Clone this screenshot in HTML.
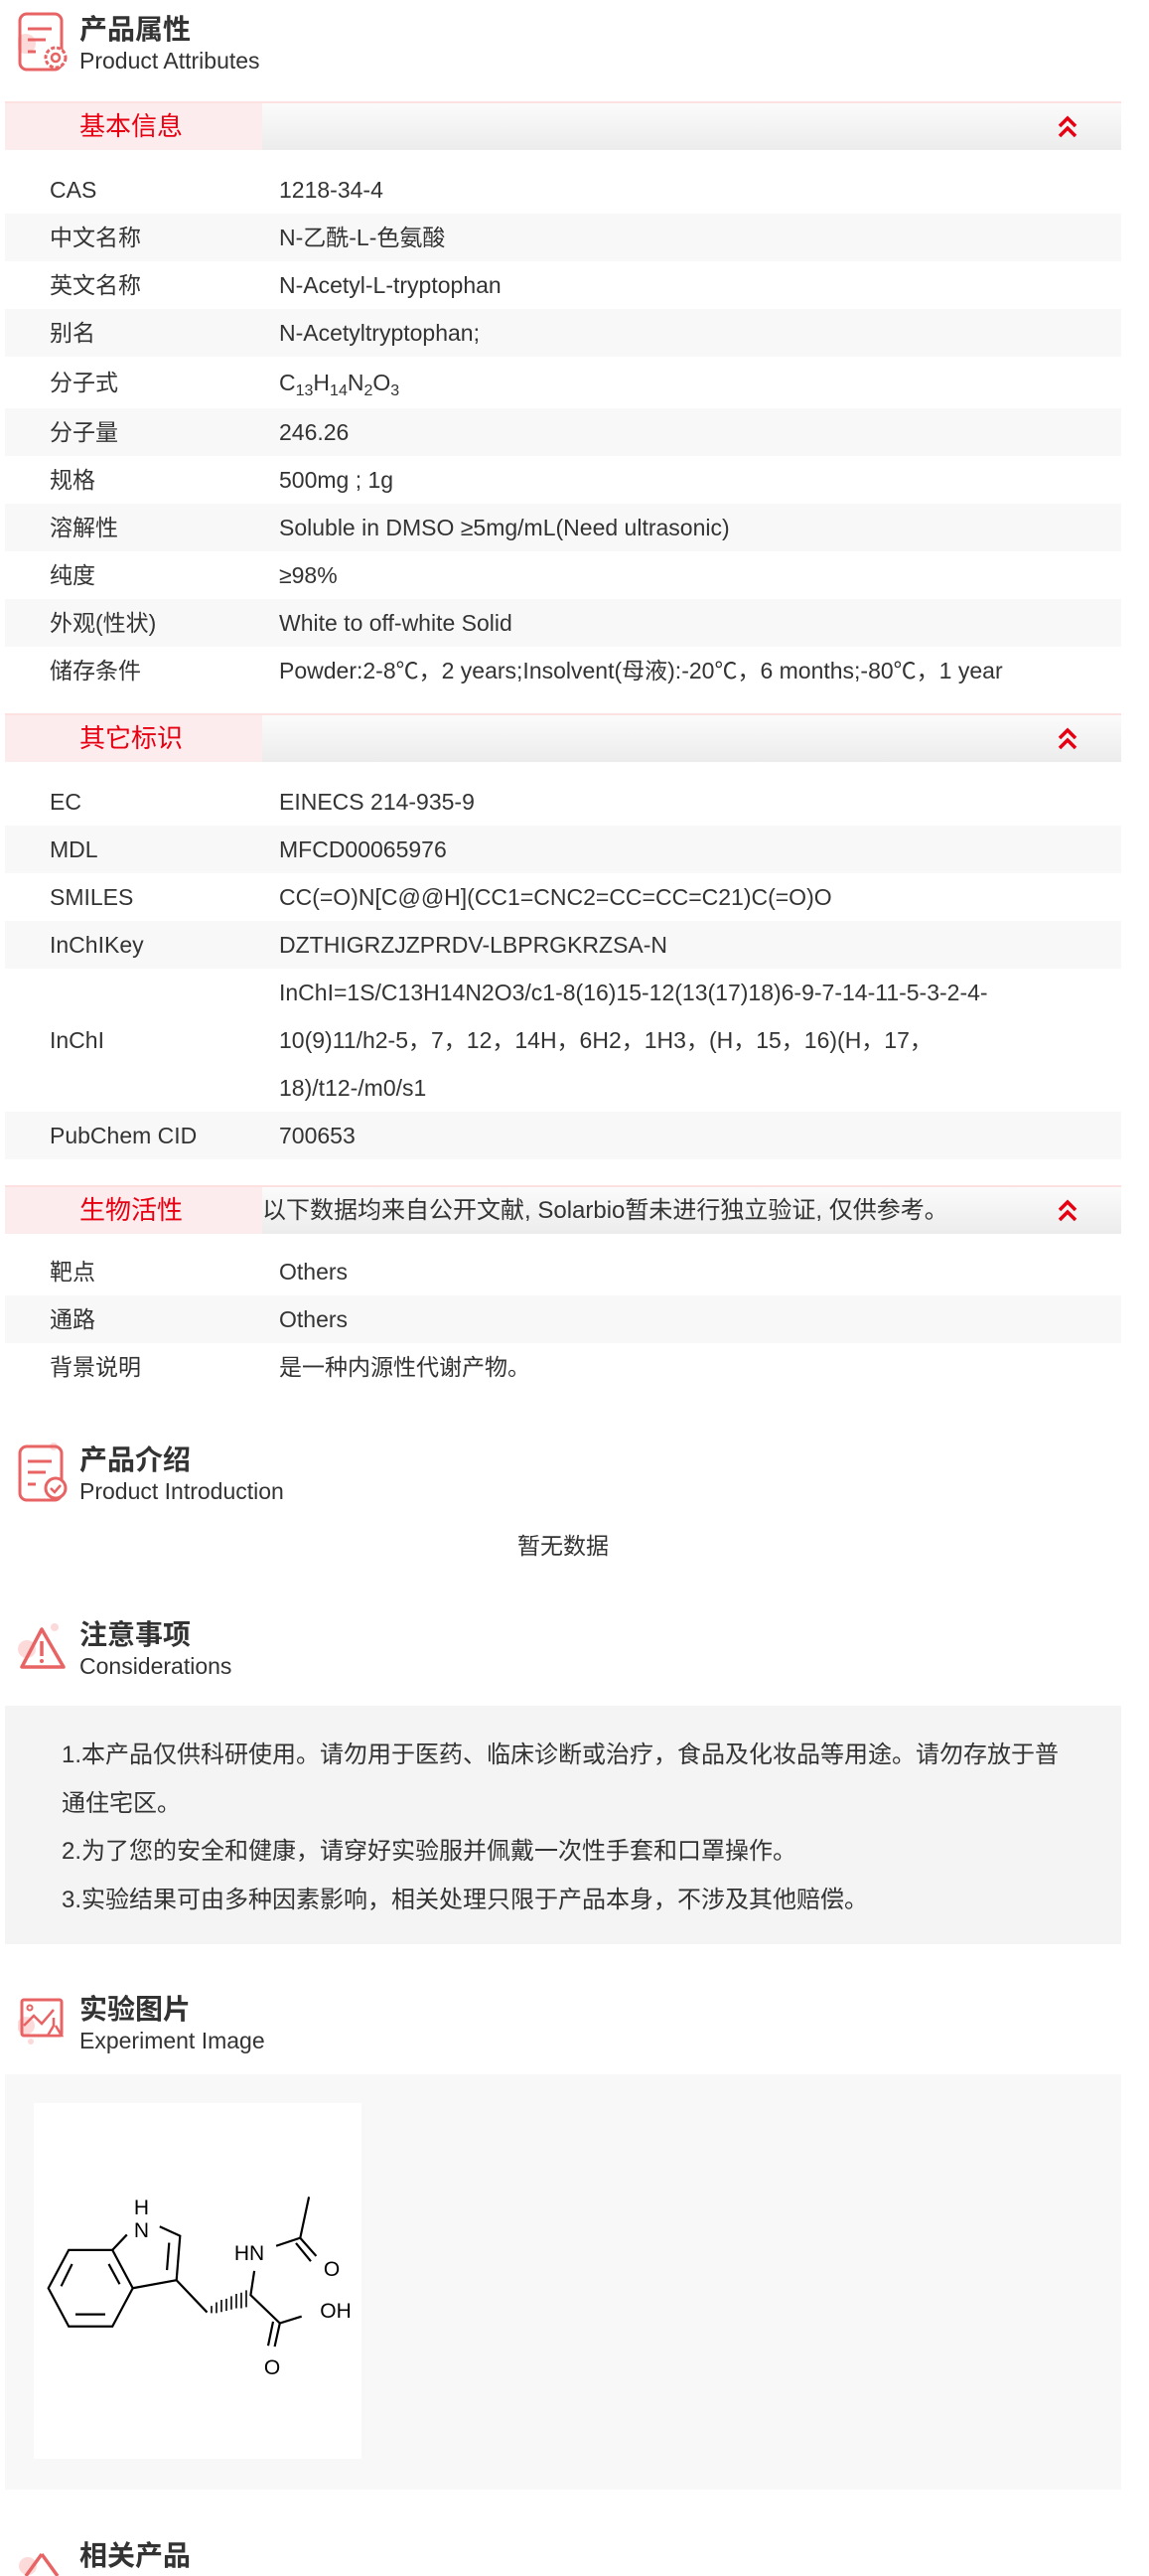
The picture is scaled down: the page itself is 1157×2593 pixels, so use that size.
<!DOCTYPE html>
<html><head><meta charset="utf-8">
<style>
*{margin:0;padding:0;box-sizing:border-box}
body{width:1157px;height:2586px;background:#fff;position:relative;overflow:hidden;font-family:"Liberation Sans","Noto Sans CJK SC",sans-serif;color:#333}
.abs{position:absolute}
.hd{position:absolute;left:18px}
.hd .t{position:absolute;left:62px;top:0;font-size:28px;font-weight:bold;color:#333;white-space:nowrap;line-height:32px}
.hd .s{position:absolute;left:62px;top:34px;font-size:23px;color:#333;white-space:nowrap;line-height:26px}
.hd svg{position:absolute;left:0;top:0}
.bar{position:absolute;left:5px;width:1124px;height:49px;border-top:2px solid #fde0e0;background:linear-gradient(#fbfbfb,#ececec)}
.bar .p{position:absolute;left:0;top:0;width:259px;height:47px;background:#fdeced;color:#e60012;font-size:26px;line-height:47px;padding-left:75px}
.bar .n{position:absolute;left:259px;top:0;line-height:47px;font-size:24px;color:#333;white-space:nowrap}
.bar svg{position:absolute;left:1057px;top:10px}
.row{position:absolute;left:5px;width:1124px;height:48px;font-size:23px;line-height:48px}
.row.g{background:#f8f8f8}
.row .l{position:absolute;left:45px;top:0;white-space:nowrap}
.row .v{position:absolute;left:276px;top:0;white-space:nowrap}
sub{font-size:16px;vertical-align:-5px;line-height:0}
</style></head><body>

<div class="hd" style="top:12px">
<svg width="52" height="60" viewBox="0 0 52 60"><circle cx="8" cy="32" r="10" fill="#fcdada"/><rect x="2" y="2" width="42" height="56" rx="7" fill="none" stroke="#e86464" stroke-width="3"/><path d="M10 17h24M10 28h18M10 40h8" stroke="#e86464" stroke-width="3"/><circle cx="38" cy="46" r="10" fill="#fff" stroke="#e86464" stroke-width="3" stroke-dasharray="4 2"/><circle cx="38" cy="46" r="4" fill="none" stroke="#e86464" stroke-width="2.5"/></svg>
<div class="t" style="top:2px">产品属性</div><div class="s" style="top:36px">Product Attributes</div></div>

<div class="bar" style="top:102px"><div class="p">基本信息</div><svg width="26" height="26" viewBox="0 0 26 26"><path d="M5 13l8-8 8 8M5 23l8-8 8 8" fill="none" stroke="#e60012" stroke-width="3.5"/></svg></div>

<div class="row" style="top:167px"><span class="l">CAS</span><span class="v">1218-34-4</span></div>
<div class="row g" style="top:215px"><span class="l">中文名称</span><span class="v">N-乙酰-L-色氨酸</span></div>
<div class="row" style="top:263px"><span class="l">英文名称</span><span class="v">N-Acetyl-L-tryptophan</span></div>
<div class="row g" style="top:311px"><span class="l">别名</span><span class="v">N-Acetyltryptophan;</span></div>
<div class="row" style="top:359px;height:52px;line-height:52px"><span class="l">分子式</span><span class="v">C<sub>13</sub>H<sub>14</sub>N<sub>2</sub>O<sub>3</sub></span></div>
<div class="row g" style="top:411px"><span class="l">分子量</span><span class="v">246.26</span></div>
<div class="row" style="top:459px"><span class="l">规格</span><span class="v">500mg ; 1g</span></div>
<div class="row g" style="top:507px"><span class="l">溶解性</span><span class="v">Soluble in DMSO ≥5mg/mL(Need ultrasonic)</span></div>
<div class="row" style="top:555px"><span class="l">纯度</span><span class="v">≥98%</span></div>
<div class="row g" style="top:603px"><span class="l">外观(性状)</span><span class="v">White to off-white Solid</span></div>
<div class="row" style="top:651px"><span class="l">储存条件</span><span class="v">Powder:2-8℃，2 years;Insolvent(母液):-20℃，6 months;-80℃，1 year</span></div>

<div class="bar" style="top:718px"><div class="p">其它标识</div><svg width="26" height="26" viewBox="0 0 26 26"><path d="M5 13l8-8 8 8M5 23l8-8 8 8" fill="none" stroke="#e60012" stroke-width="3.5"/></svg></div>

<div class="row" style="top:783px"><span class="l">EC</span><span class="v">EINECS 214-935-9</span></div>
<div class="row g" style="top:831px"><span class="l">MDL</span><span class="v">MFCD00065976</span></div>
<div class="row" style="top:879px"><span class="l">SMILES</span><span class="v">CC(=O)N[C@@H](CC1=CNC2=CC=CC=C21)C(=O)O</span></div>
<div class="row g" style="top:927px"><span class="l">InChIKey</span><span class="v">DZTHIGRZJZPRDV-LBPRGKRZSA-N</span></div>
<div class="row" style="top:975px;height:144px"><span class="l" style="top:48px">InChI</span><span class="v">InChI=1S/C13H14N2O3/c1-8(16)15-12(13(17)18)6-9-7-14-11-5-3-2-4-<br>10(9)11/h2-5，7，12，14H，6H2，1H3，(H，15，16)(H，17，<br>18)/t12-/m0/s1</span></div>
<div class="row g" style="top:1119px"><span class="l">PubChem CID</span><span class="v">700653</span></div>

<div class="bar" style="top:1193px"><div class="p">生物活性</div><div class="n">以下数据均来自公开文献, Solarbio暂未进行独立验证, 仅供参考。</div><svg width="26" height="26" viewBox="0 0 26 26"><path d="M5 13l8-8 8 8M5 23l8-8 8 8" fill="none" stroke="#e60012" stroke-width="3.5"/></svg></div>

<div class="row" style="top:1256px"><span class="l">靶点</span><span class="v">Others</span></div>
<div class="row g" style="top:1304px"><span class="l">通路</span><span class="v">Others</span></div>
<div class="row" style="top:1352px"><span class="l">背景说明</span><span class="v">是一种内源性代谢产物。</span></div>

<div class="hd" style="top:1452px">
<svg width="52" height="60" viewBox="0 0 52 60"><circle cx="36" cy="4" r="4" fill="#fcdada"/><rect x="2" y="4" width="42" height="54" rx="7" fill="none" stroke="#e86464" stroke-width="3"/><path d="M10 19h24M10 30h18M10 42h8" stroke="#e86464" stroke-width="3"/><circle cx="38" cy="46" r="10" fill="#fff" stroke="#e86464" stroke-width="3"/><path d="M33 46l4 4 6-7" fill="none" stroke="#e86464" stroke-width="2.5"/></svg>
<div class="t" style="top:2px">产品介绍</div><div class="s" style="top:36px">Product Introduction</div></div>

<div class="abs" style="left:0;width:1134px;top:1540px;text-align:center;font-size:23px;line-height:32px">暂无数据</div>

<div class="hd" style="top:1630px">
<svg width="52" height="54" viewBox="0 0 52 54"><circle cx="9" cy="30" r="9" fill="#fcdada"/><circle cx="37" cy="8" r="4" fill="#fcdada"/><path d="M24 10L4 48h42z" fill="none" stroke="#e86464" stroke-width="3.5" stroke-linejoin="round"/><path d="M24 22v15" stroke="#e86464" stroke-width="3.5"/><circle cx="24" cy="42" r="2" fill="#e86464"/></svg>
<div class="t">注意事项</div><div class="s">Considerations</div></div>

<div class="abs" style="left:5px;top:1717px;width:1124px;height:240px;background:#f4f4f4">
<div style="position:absolute;left:57px;top:26px;width:1020px;font-size:24px;line-height:48.5px;color:#333">1.本产品仅供科研使用。请勿用于医药、临床诊断或治疗，食品及化妆品等用途。请勿存放于普通住宅区。<br>2.为了您的安全和健康，请穿好实验服并佩戴一次性手套和口罩操作。<br>3.实验结果可由多种因素影响，相关处理只限于产品本身，不涉及其他赔偿。</div></div>

<div class="hd" style="top:2003px">
<svg width="52" height="58" viewBox="0 0 52 58"><circle cx="8" cy="36" r="9" fill="#fcdada"/><circle cx="13" cy="52" r="3" fill="#fcdada"/><rect x="4" y="10" width="40" height="36" rx="2" fill="none" stroke="#e86464" stroke-width="3"/><circle cx="12" cy="18" r="2.5" fill="none" stroke="#e86464" stroke-width="2"/><path d="M6 36l10-10 8 8 12-14" fill="none" stroke="#e86464" stroke-width="2.5"/><path d="M36 28v8l-6 10h14l-6-10" fill="#fff" stroke="#e86464" stroke-width="2.5"/></svg>
<div class="t" style="top:4px">实验图片</div><div class="s" style="top:38px">Experiment Image</div></div>

<div class="abs" style="left:5px;top:2088px;width:1124px;height:418px;background:#f8f8f8"></div>
<svg class="abs" style="left:34px;top:2117px" width="330" height="358" viewBox="0 0 330 358">
<rect width="330" height="358" fill="#fff"/>
<g transform="scale(1,1.215)">
<g fill="none" stroke="#000" stroke-width="2.2" vector-effect="non-scaling-stroke">
<path vector-effect="non-scaling-stroke" d="M35.2 121.7L79.2 121.7L99.7 153.3L79.2 185L35.2 185L14.7 153.3Z"/>
<path vector-effect="non-scaling-stroke" d="M42 175H72M27.6 151.7L38.6 133.3M75.5 133.3L86.5 150"/>
<path vector-effect="non-scaling-stroke" d="M79.2 121.7L93.8 109M126.8 102.3L147.3 110L143.7 146.7L99.7 153.3M136.3 115.7L134.1 138.3"/>
<path vector-effect="non-scaling-stroke" d="M143.7 146.7L174.5 173.3"/>
<path vector-effect="non-scaling-stroke" d="M222.1 139L218.4 159L247.8 182.3L269.7 176.7M247.8 182.3L242.6 201.7M241 181L236 201"/>
<path vector-effect="non-scaling-stroke" d="M244.1 118.3L268.3 111.7L277.1 77.7M268.3 111.7L284.4 126.7M264 116L279 131"/>
</g>
<g stroke="#000" stroke-width="1.6">
<path vector-effect="non-scaling-stroke" d="M179 168v6M184 165v9M189 163v10M194 162v10M199 160v11M204 158v12M209 157v13M214 155v14"/>
</g>
</g>
<g font-family="Liberation Sans" font-size="21" fill="#000" text-anchor="middle">
<text x="108.5" y="112">H</text><text x="108.5" y="135">N</text>
<text x="217" y="158">HN</text>
<text x="300" y="174">O</text>
<text x="304" y="216">OH</text>
<text x="240" y="273">O</text>
</g>
</svg>

<div class="hd" style="top:2553px">
<svg width="52" height="40" viewBox="0 0 52 40"><circle cx="10" cy="30" r="9" fill="#fcdada"/><path d="M24 18L8 40M24 18L40 40" fill="none" stroke="#e86464" stroke-width="3.5"/></svg>
<div class="t" style="top:4px">相关产品</div></div>
</body></html>
